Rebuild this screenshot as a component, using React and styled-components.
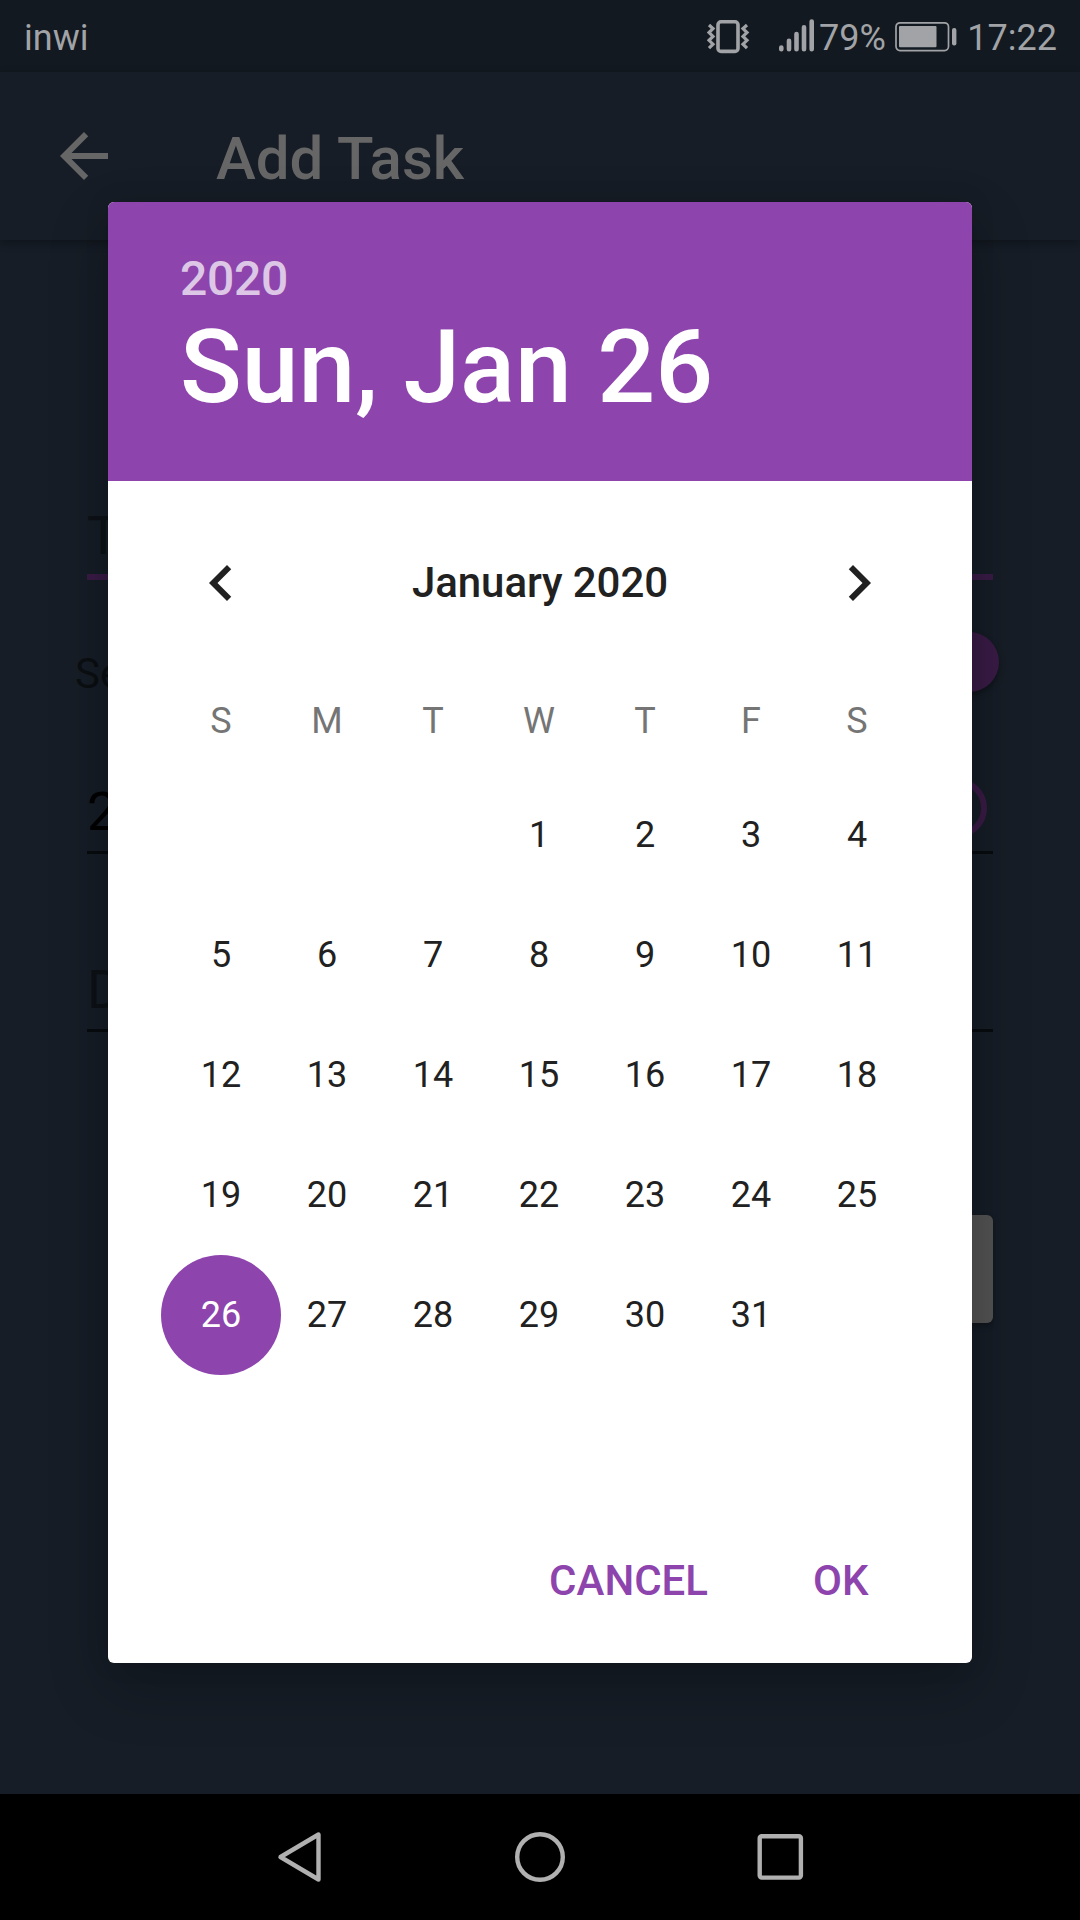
import React from "react";
import styled, { createGlobalStyle } from "styled-components";

const accent = "#8e44ad";

const GlobalStyle = createGlobalStyle`
  *, *::before, *::after { box-sizing: border-box; }
  body { margin: 0; background: #000; font-family: Roboto, "Liberation Sans", sans-serif; }
  button { border: 0; padding: 0; background: none; font-family: inherit; }
  svg { display: block; flex: none; }
`;

const Screen = styled.div`
  position: relative;
  display: flex;
  flex-direction: column;
  width: 1080px;
  height: 1920px;
  overflow: hidden;
  background: #161d26;
`;

const StatusBar = styled.header`
  display: flex;
  align-items: center;
  height: 72px;
  padding: 0 24px;
  background: #121920;
  color: #a1a3a6;
  font-size: 36px;
`;

const Carrier = styled.span`
  flex: 1;
  padding-top: 4px;
`;

const Indicators = styled.div`
  display: flex;
  align-items: center;
`;

const Signal = styled.div`
  display: flex;
  margin-left: 27px;
`;

const Level = styled.span`
  width: 80px;
  padding: 4px 0 0 4px;
`;

const Clock = styled.span`
  width: 100px;
  margin-right: -1px;
  padding-top: 4px;
  text-align: right;
`;

const AppBar = styled.div`
  display: flex;
  align-items: flex-start;
  height: 168px;
  padding: 48px 48px 0;
  background: #161d26;
  box-shadow: 0 3px 9px rgba(0, 0, 0, 0.3);
  color: #666;
`;

const Title = styled.h1`
  margin: 0 0 0 96px;
  font-size: 60px;
  font-weight: 500;
  line-height: 77px;
`;

const Form = styled.main`
  flex: 1;
  display: flex;
  flex-direction: column;
  padding: 259px 87px 0;
`;

const Field = styled.div`
  display: flex;
  align-items: flex-start;
  justify-content: space-between;
  height: ${(p) => p.$height}px;
  border-bottom: ${(p) => p.$line}px solid ${(p) => p.$lineColor};
  color: ${(p) => p.$color};
  font-size: 54px;
  line-height: 73px;
`;

const ScheduleRow = styled.div`
  display: flex;
  align-items: center;
  justify-content: space-between;
  height: 64px;
  margin: 50px -6px 0 -12px;
  color: #0b0f12;
  font-size: 42px;
`;

const ScheduleLabel = styled.span`
  padding-top: 22px;
`;

const Thumb = styled.span`
  width: 60px;
  height: 60px;
  border-radius: 50%;
  background: #391b45;
  box-shadow: 0 3px 6px rgba(0, 0, 0, 0.35);
`;

const Ring = styled.span`
  width: 60px;
  height: 60px;
  margin: 3px 6px 0 0;
  border: 6px solid #391b45;
  border-radius: 50%;
`;

const Spacer = styled.div`
  height: ${(p) => p.$size}px;
`;

const SaveButton = styled.button`
  align-self: flex-end;
  width: 320px;
  height: 108px;
  border-radius: 6px;
  background: #525252;
  box-shadow: 0 3px 6px rgba(0, 0, 0, 0.3);
`;

const NavBar = styled.nav`
  display: flex;
  align-items: center;
  justify-content: center;
  gap: 180px;
  height: 126px;
  background: #000;
`;

const Overlay = styled.div`
  position: absolute;
  inset: 72px 0 127px;
  display: flex;
  align-items: center;
  justify-content: center;
`;

const Dialog = styled.section`
  display: flex;
  flex-direction: column;
  width: 864px;
  height: 1461px;
  overflow: hidden;
  border-radius: 6px;
  background: #fff;
  box-shadow: 0 24px 60px rgba(0, 0, 0, 0.22), 0 0 24px rgba(0, 0, 0, 0.1);
`;

const DialogHeader = styled.div`
  height: 279px;
  padding: 49px 72px 0;
  background: ${accent};
  color: #fff;
`;

const Year = styled.div`
  font-size: 48px;
  font-weight: 500;
  line-height: 56px;
  letter-spacing: -0.3px;
  opacity: 0.7;
`;

const PickedDate = styled.div`
  font-size: 102px;
  font-weight: 500;
  line-height: 120px;
`;

const MonthBar = styled.div`
  display: flex;
  align-items: center;
  justify-content: space-between;
  height: 72px;
  margin: 66px 77px 0;
  color: #212121;
`;

const MonthName = styled.div`
  padding-bottom: 2px;
  font-size: 42px;
  font-weight: 500;
  letter-spacing: -0.1px;
`;

const Grid = styled.div`
  display: grid;
  grid-template-columns: repeat(7, 106px);
  padding: 0 60px;
  justify-items: center;
`;

const Weekdays = styled(Grid)`
  margin-top: 67px;
  color: #757575;
  font-size: 36px;
  line-height: 71px;
`;

const Days = styled(Grid)`
  margin-top: 18px;
  grid-auto-rows: 120px;
`;

const Day = styled.button`
  width: 120px;
  height: 120px;
  margin: 0 -7px;
  border-radius: 50%;
  background: ${(p) => (p.$selected ? accent : "transparent")};
  color: ${(p) => (p.$selected ? "#fff" : "#212121")};
  font-size: 36px;
  line-height: 120px;
  text-align: center;
`;

const Actions = styled.div`
  display: flex;
  justify-content: flex-end;
  gap: 105px;
  margin: auto 103.5px 46px 0;
`;

const Action = styled.button`
  color: ${accent};
  font-size: 42px;
  font-weight: 500;
  line-height: 72px;
`;

const weekdays = ["S", "M", "T", "W", "T", "F", "S"];
const firstColumn = 3;
const cells = [
  ...Array(firstColumn).fill(null),
  ...Array.from({ length: 31 }, (_, i) => i + 1),
];

const VibrateIcon = () => (
  <svg width="44" height="36" viewBox="0 0 44 36" fill="none" stroke="#a1a3a6">
    <rect x="11" y="3.8" width="20" height="29.6" rx="3" strokeWidth="3.6" />
    <path d="M2 7l4 3.6-4 3.9 4 3.9-4 3.9 4 3.9-4 3.9" strokeWidth="3.2" />
    <path d="M40 7l-4 3.6 4 3.9-4 3.9 4 3.9-4 3.9 4 3.9" strokeWidth="3.2" />
  </svg>
);

const SignalIcon = () => (
  <svg width="37" height="36" viewBox="0 0 37 36" stroke="#a1a3a6" strokeWidth="4.6" strokeLinecap="round">
    <path d="M3.3 29.5v1.8M11 22.8v8.5M18.5 16v15.3M26 9.3v22M33.7 3.5v27.8" />
  </svg>
);

const BatteryIcon = () => (
  <svg width="62" height="36" viewBox="0 0 62 36">
    <rect x="1" y="4.8" width="52.5" height="27.8" rx="4" fill="none" stroke="#a1a3a6" strokeWidth="1.7" />
    <rect x="4" y="8" width="37.5" height="21.3" rx="1" fill="#a1a3a6" />
    <rect x="57" y="10" width="4.4" height="17.6" rx="2" fill="#a1a3a6" />
  </svg>
);

const GlyphIcon = ({ d }) => (
  <svg width="72" height="72" viewBox="0 0 24 24" fill="currentColor">
    <path d={d} />
  </svg>
);

const NavIcon = ({ children }) => (
  <svg width="60" height="60" viewBox="0 0 60 60" fill="none" stroke="#b0b0b0" strokeWidth="4.4" strokeLinejoin="round">
    {children}
  </svg>
);

export default function App() {
  return (
    <Screen>
      <GlobalStyle />
      <StatusBar>
        <Carrier>inwi</Carrier>
        <Indicators>
          <VibrateIcon />
          <Signal>
            <SignalIcon />
          </Signal>
          <Level>79%</Level>
          <BatteryIcon />
          <Clock>17:22</Clock>
        </Indicators>
      </StatusBar>
      <AppBar>
        <GlyphIcon d="M20 11H7.83l5.59-5.59L12 4l-8 8 8 8 1.41-1.41L7.83 13H20v-2z" />
        <Title>Add Task</Title>
      </AppBar>
      <Form>
        <Field $height={81} $line={6} $lineColor="#391b45" $color="#0d1216">T</Field>
        <ScheduleRow>
          <ScheduleLabel>Se</ScheduleLabel>
          <Thumb />
        </ScheduleRow>
        <Spacer $size={81} />
        <Field $height={79} $line={3} $lineColor="#080c0f" $color="#000">
          2
          <Ring />
        </Field>
        <Spacer $size={99} />
        <Field $height={79} $line={3} $lineColor="#080c0f" $color="#0d1216">D</Field>
        <Spacer $size={183} />
        <SaveButton />
      </Form>
      <NavBar>
        <NavIcon><path d="M48.5 7.5v45L10.5 30z" /></NavIcon>
        <NavIcon><circle cx="30" cy="30" r="22.8" /></NavIcon>
        <NavIcon><rect x="9.7" y="9.2" width="41.2" height="41.4" rx="2" /></NavIcon>
      </NavBar>
      <Overlay>
        <Dialog>
          <DialogHeader>
            <Year>2020</Year>
            <PickedDate>Sun, Jan 26</PickedDate>
          </DialogHeader>
          <MonthBar>
            <GlyphIcon d="M15.41 7.41L14 6l-6 6 6 6 1.41-1.41L10.83 12z" />
            <MonthName>January 2020</MonthName>
            <GlyphIcon d="M10 6L8.59 7.41 13.17 12l-4.58 4.59L10 18l6-6z" />
          </MonthBar>
          <Weekdays>
            {weekdays.map((d, i) => <span key={i}>{d}</span>)}
          </Weekdays>
          <Days>
            {cells.map((d, i) =>
              d === null ? <span key={i} /> : <Day key={i} $selected={d === 26}>{d}</Day>
            )}
          </Days>
          <Actions>
            <Action>CANCEL</Action>
            <Action>OK</Action>
          </Actions>
        </Dialog>
      </Overlay>
    </Screen>
  );
}
